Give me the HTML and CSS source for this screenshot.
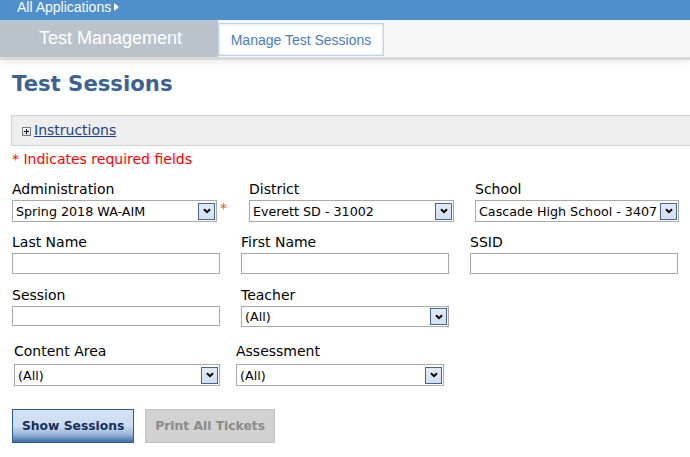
FILE: index.html
```html
<!DOCTYPE html>
<html lang="en">
<head>
<meta charset="utf-8">
<title>Test Sessions</title>
<link rel="stylesheet" href="styles.css">
</head>
<body>
<div class="topbar">
  <span class="topbar-link">All Applications</span>
  <svg class="topbar-caret" width="5" height="8" viewBox="0 0 5 8"><path d="M0 0L5 4L0 8Z" fill="#fff"/></svg>
</div>
<div class="navbar">
  <div class="app-title">Test Management</div>
  <div class="tab">Manage Test Sessions</div>
</div>
<main class="main">
  <h1 class="page-title">Test Sessions</h1>
  <div class="instructions">
    <svg class="plus" width="9" height="9" viewBox="0 0 9 9">
      <defs><linearGradient id="pg" x1="0" y1="0" x2="0" y2="1"><stop offset="0" stop-color="#ffffff"/><stop offset="1" stop-color="#d6d6d6"/></linearGradient></defs>
      <rect x="0.5" y="0.5" width="8" height="8" fill="url(#pg)" stroke="#6f7a85"/>
      <path d="M2 4.5H7M4.5 2V7" stroke="#000" stroke-width="1"/>
    </svg>
    <a class="instructions-link" href="#">Instructions</a>
  </div>
  <div class="required-note">* Indicates required fields</div>

  <div class="row row-1">
    <div class="field">
      <label class="label">Administration</label>
      <div class="control-wrap">
        <div class="select w205"><span class="select-value">Spring 2018 WA-AIM</span><span class="select-arrow"><svg width="8" height="6" viewBox="0 0 8 6"><path d="M1 1.2L4 4.2L7 1.2" stroke="#000" stroke-width="2" fill="none"/></svg></span></div>
        <span class="req">*</span>
      </div>
    </div>
    <div class="field">
      <label class="label">District</label>
      <div class="select w205"><span class="select-value">Everett SD - 31002</span><span class="select-arrow"><svg width="8" height="6" viewBox="0 0 8 6"><path d="M1 1.2L4 4.2L7 1.2" stroke="#000" stroke-width="2" fill="none"/></svg></span></div>
    </div>
    <div class="field">
      <label class="label">School</label>
      <div class="select w204"><span class="select-value">Cascade High School - 3407</span><span class="select-arrow"><svg width="8" height="6" viewBox="0 0 8 6"><path d="M1 1.2L4 4.2L7 1.2" stroke="#000" stroke-width="2" fill="none"/></svg></span></div>
    </div>
  </div>

  <div class="row row-2">
    <div class="field">
      <label class="label">Last Name</label>
      <input class="input" type="text">
    </div>
    <div class="field">
      <label class="label">First Name</label>
      <input class="input" type="text">
    </div>
    <div class="field">
      <label class="label">SSID</label>
      <input class="input" type="text">
    </div>
  </div>

  <div class="row row-3">
    <div class="field">
      <label class="label">Session</label>
      <input class="input input-short" type="text">
    </div>
    <div class="field">
      <label class="label">Teacher</label>
      <div class="select w208 select-teacher"><span class="select-value">(All)</span><span class="select-arrow"><svg width="8" height="6" viewBox="0 0 8 6"><path d="M1 1.2L4 4.2L7 1.2" stroke="#000" stroke-width="2" fill="none"/></svg></span></div>
    </div>
  </div>

  <div class="row row-4">
    <div class="field">
      <label class="label">Content Area</label>
      <div class="select w206"><span class="select-value">(All)</span><span class="select-arrow"><svg width="8" height="6" viewBox="0 0 8 6"><path d="M1 1.2L4 4.2L7 1.2" stroke="#000" stroke-width="2" fill="none"/></svg></span></div>
    </div>
    <div class="field">
      <label class="label">Assessment</label>
      <div class="select w208"><span class="select-value">(All)</span><span class="select-arrow"><svg width="8" height="6" viewBox="0 0 8 6"><path d="M1 1.2L4 4.2L7 1.2" stroke="#000" stroke-width="2" fill="none"/></svg></span></div>
    </div>
  </div>

  <div class="buttons">
    <button class="btn btn-primary" type="button">Show Sessions</button>
    <button class="btn btn-disabled" type="button">Print All Tickets</button>
  </div>
</main>
</body>
</html>
```
FILE: styles.css
```css
html, body {
  margin: 0;
  padding: 0;
  background: #ffffff;
}

body {
  font-family: "DejaVu Sans", Verdana, sans-serif;
  font-size: 14px;
  color: #000;
  overflow: hidden;
}

.topbar {
  height: 20px;
  background: #4f90cc;
  display: flex;
  align-items: flex-start;
  padding-left: 17px;
  font-family: "Liberation Sans", Arial, sans-serif;
  font-size: 14px;
  line-height: 14px;
  color: #fff;
}

.topbar-caret {
  margin-left: 3px;
  margin-top: 3px;
}

.navbar {
  height: 37px;
  background: #f7f7f7;
  display: flex;
  border-bottom: 3px solid #d9d9d9;
  box-shadow: 0 3px 7px rgba(0, 0, 0, 0.08);
  position: relative;
}

.app-title {
  width: 218px;
  background: #b9c3cb;
  color: #fff;
  font-family: "Liberation Sans", Arial, sans-serif;
  font-size: 18px;
  line-height: 37px;
  padding-left: 39px;
  box-sizing: border-box;
}

.tab {
  width: 166px;
  margin: 3px 0 1px 0;
  box-sizing: border-box;
  background: #fff;
  border: 1px solid #bcd3ec;
  box-shadow: inset 0 0 3px #c8dbf0;
  font-family: "Liberation Sans", Arial, sans-serif;
  font-size: 14px;
  color: #4b7dbd;
  display: flex;
  align-items: center;
  justify-content: center;
}

.main {
  padding-left: 12px;
}

.page-title {
  margin: 11px 0 0 0;
  font-size: 21.2px;
  font-weight: bold;
  line-height: 25px;
  color: #3a6394;
}

.instructions {
  margin: 19px 0 0 -1px;
  height: 31px;
  box-sizing: border-box;
  border: 1px solid #cfcfcf;
  border-right: none;
  background: #eeeeee;
  display: flex;
  align-items: center;
  padding-left: 10px;
}

.plus {
  margin-right: 3px;
  margin-top: 1px;
}

.instructions-link {
  color: #1d3f91;
  text-decoration: underline;
  font-size: 14px;
  line-height: 17px;
}

.required-note {
  margin-top: 5px;
  color: #ff0000;
  font-size: 14px;
  line-height: 17px;
}

.row {
  display: grid;
}

.row-1 {
  margin-top: 13px;
  grid-template-columns: 237px 226px 204px;
}

.row-2 {
  margin-top: 12px;
  grid-template-columns: 229px 229px 208px;
}

.row-3 {
  margin-top: 13px;
  grid-template-columns: 229px 229px;
}

.row-4 {
  margin-top: 16px;
  padding-left: 2px;
  grid-template-columns: 222px 208px;
}

.field {
  display: flex;
  flex-direction: column;
  align-items: flex-start;
}

.label {
  display: block;
  font-size: 14px;
  line-height: 17px;
  color: #000;
}

.row-1 .label + * { margin-top: 2px; }
.row-2 .label + * { margin-top: 2px; }
.row-3 .label + * { margin-top: 2px; }
.row-4 .label + * { margin-top: 4px; }

.control-wrap {
  display: flex;
  align-items: flex-start;
}

.req {
  margin-left: 3px;
  color: #ea4b2e;
  font-size: 14px;
  line-height: 17px;
}

.select {
  height: 22px;
  box-sizing: border-box;
  border: 1px solid #a9a9a9;
  background: #fff;
  display: flex;
  align-items: center;
  justify-content: space-between;
  padding: 0 1px 0 3px;
  font-size: 12.7px;
  color: #000;
  white-space: nowrap;
  overflow: hidden;
}

.select-teacher {
  height: 21px;
}

.w204 { width: 204px; }
.w205 { width: 205px; }
.w206 { width: 206px; }
.w208 { width: 208px; }

.select-value {
  overflow: hidden;
}

.select-arrow {
  flex: none;
  width: 17px;
  height: 17px;
  box-sizing: border-box;
  border: 1px solid #45668f;
  background: linear-gradient(#e2ebf7, #d2e0f1);
  display: flex;
  align-items: center;
  justify-content: center;
}

.input {
  width: 208px;
  height: 21px;
  box-sizing: border-box;
  border: 1px solid #a9a9a9;
  background: #fff;
  margin: 0;
  padding: 0 3px;
  font-family: "DejaVu Sans", Verdana, sans-serif;
  font-size: 12.7px;
}

.input-short {
  height: 20px;
}

.buttons {
  margin-top: 23px;
  display: flex;
  gap: 11px;
}

.btn {
  height: 34px;
  padding: 0 9px;
  margin: 0;
  font-family: "DejaVu Sans", Verdana, sans-serif;
  font-size: 12.3px;
  font-weight: bold;
  box-sizing: border-box;
  cursor: pointer;
}

.btn-primary {
  border: 1px solid #2d5b93;
  background: linear-gradient(#d3e1f4 0%, #cddcf0 50%, #9cb8da 75%, #3d6ca6 100%);
  color: #142f5c;
}

.btn-disabled {
  border: 1px solid #c3c3c3;
  background: #d2d2d2;
  color: #8b8b8b;
}
```
